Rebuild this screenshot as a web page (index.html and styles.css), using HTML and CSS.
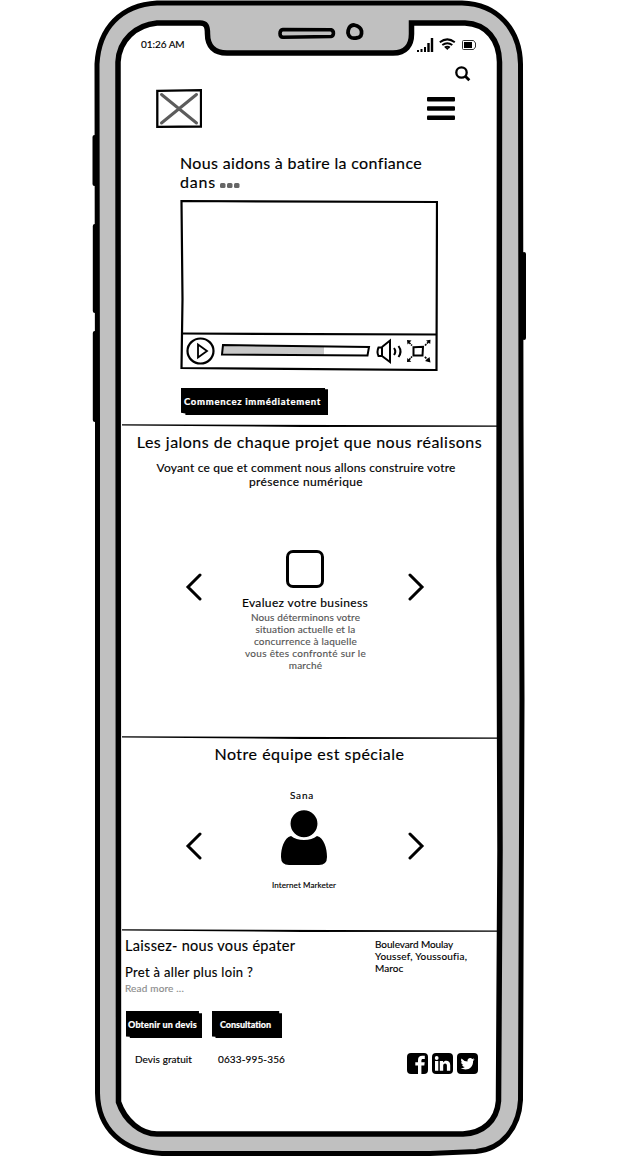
FILE: index.html
```html
<!DOCTYPE html>
<html lang="fr">
<head>
<meta charset="utf-8">
<title>Nous aidons à batire la confiance</title>
<link rel="stylesheet" href="styles.css">
</head>
<body>
<div class="phone">
  <svg class="bezel" width="618" height="1156" viewBox="0 0 618 1156" aria-hidden="true">
    <path d="M94.500 137v47M94.800 226v85M94.800 333v87M524 254v84" stroke="#000" stroke-width="4" stroke-linecap="round"/>
    <path class="case" d="M157 3H462C498 4 520 30 520.500 64L521 420L522 700L520.500 1100C519 1128 502 1149 476 1151.500L430 1153.500H162C122 1152 98 1128 97.500 1093L97.500 420L97 64C99 28 121 5 157 3Z"/>
    <path class="glass" d="M157 23H200C206 23 207.500 26 207.500 34C207.500 46 214 53 227 53H393C406 53 411.500 45 411.500 34V23H465C487 24 499 40 499.500 62L499 560L500 850L498.500 1101C497 1121 483 1133 463 1134H157C141 1134 125 1121 118.500 1102L118 62C119 40 136 25 157 23Z"/>
    <path d="M283 29.500L331 29.800C334.500 31 334 36 331 36.500L283 37.300C279 37 279 30 283 29.500Z" fill="#c0c0c0" stroke="#000" stroke-width="3.600"/>
    <path d="M354 25C349 25 348 30 348 33C349 38 353 38.500 356 38C361 37.500 362 35 361.500 31C361 28 359 26 354 25Z" fill="#c0c0c0" stroke="#000" stroke-width="3.800"/>
  </svg>

  <main class="screen">
    <header class="top">
      <div class="status">
        <span class="time">01:26 AM</span>
        <svg width="60" height="14" viewBox="0 0 60 14">
          <path d="M0 12h2v2h-2zM3.500 11h2v3h-2zM7 9h2v5h-2zM10.300 5h2.400v9h-2.400zM13.800 0h2.400v14h-2.400z"/>
          <path d="M22.800 4.300Q30.300-1.500 37.800 4.300M25.300 7Q30.300 3.400 35.300 7M27.700 9.500Q30.300 7.800 32.900 9.500" fill="none" stroke="#000" stroke-width="2"/>
          <path d="M28.500 10h3.600l-1.800 2z"/>
          <path d="M46.500 2.500H56.500L58.500 5V9L56.500 11.500H46.500Q45.500 11.500 45.500 10.500V3.500Q45.500 2.500 46.500 2.500Z" fill="none" stroke="#333"/>
          <path d="M47 4h8v6h-8z"/>
        </svg>
      </div>
      <svg class="search" width="16" height="16" viewBox="0 0 16 16" fill="none" stroke="#000" stroke-width="2.300"><circle cx="6.500" cy="6.500" r="5.200"/><path d="M10.300 10.300l4 4" stroke-width="2.800"/></svg>
      <div class="brand">
        <svg width="46" height="39" viewBox="0 0 46 39" fill="none"><path d="M1.300 1.800L45 1.200V37.500L1.300 37.800Z" stroke="#000" stroke-width="2.300"/><path d="M5.500 5.500L40.500 34M40.500 5.500L5.500 34" stroke="#5c5c5c" stroke-width="3" stroke-linecap="round"/></svg>
        <svg width="28" height="24" viewBox="0 0 28 24"><rect y="1" width="28" height="4.400" rx="1"/><rect y="10.300" width="28" height="4.400" rx="1"/><rect y="19.500" width="28" height="4.400" rx="1"/></svg>
      </div>
    </header>

    <section class="hero">
      <h1 class="title"><span class="t-hero1">Nous aidons à batire la confiance</span><br><span class="t-hero2">dans</span><svg class="dots" width="20" height="5" viewBox="0 0 20 5" fill="#666"><rect width="5.500" height="5" rx="1.500"/><rect x="7" width="5.500" height="5" rx="1.500"/><rect x="14" width="5.500" height="5" rx="1.500"/></svg></h1>
      <svg class="video" width="258" height="172" viewBox="0 0 258 172" fill="none" stroke="#000" stroke-width="2.200">
        <path d="M1.500 2L257 3L256.500 171L1.500 169L2.500 100Z"/>
        <path d="M1 134.500L257 135.500"/>
        <ellipse cx="20.500" cy="152" rx="13" ry="12.500"/>
        <path d="M18 145.500L27 152L18 158.500Z" stroke-width="1.800"/>
        <path d="M43 146L144 147.300V157L42 155.500Z" fill="#c8c8c8" stroke="none"/>
        <path d="M43 146L189 148L187.500 156.500L42 155.500Z" stroke-width="2"/>
        <path d="M198.500 148.500H202V157H198.500Q196.500 153 198.500 148.500ZM202 148L210 141.500V163L202 157M214 149q2.500 3.500 0 7M218.500 147q4 5.500 0 11" stroke-width="2"/>
        <path d="M233.500 148.300L243 147.800L242.500 156.500H233.500Z" stroke-width="2"/>
        <path d="M229 143.500l3 3M248.500 143l-3.500 3.500M229 161l3-3.500M248.500 161.500l-4-4" stroke-width="1.600" stroke-dasharray="2.200 .8"/>
        <path d="M227 141l4.500.5l-4 4zM246 141.500l4.500-.8l-.3 4.300zM227 163l.3-4l4 3.800zM250.500 163.500l-5.500-1.500l4.500-4z" fill="#000" stroke="none"/>
      </svg>
      <button class="btn btn-main"><span class="t-main">Commencez immédiatement</span></button>
    </section>

    <section class="steps">
      <svg class="rule" width="375" height="4" viewBox="0 0 375 4"><path d="M0 .2L375 1.500V2.800L180 3L0 1.500Z"/></svg>
      <h2 class="title"><span class="t-steps">Les jalons de chaque projet que nous réalisons</span></h2>
      <p class="lead"><span class="t-lead1">Voyant ce que et comment nous allons construire votre</span><br><span class="t-lead2">présence numérique</span></p>
      <div class="carousel">
        <svg class="arrow" width="17" height="28" viewBox="0 0 17 28"><path d="M15 2L3 14L15 26"/></svg>
        <article class="card">
          <div class="box"></div>
          <h3><span class="t-card">Evaluez votre business</span></h3>
          <p><span class="t-d1">Nous déterminons votre</span><br><span class="t-d2">situation actuelle et la</span><br><span class="t-d3">concurrence à laquelle</span><br><span class="t-d4">vous êtes confronté sur le</span><br><span class="t-d5">marché</span></p>
        </article>
        <svg class="arrow" width="17" height="28" viewBox="0 0 17 28"><path d="M2 2L14 14L2 26"/></svg>
      </div>
    </section>

    <section class="team">
      <svg class="rule" width="375" height="4" viewBox="0 0 375 4"><path d="M0 .2L375 1.500V2.800L180 3L0 1.500Z"/></svg>
      <h2 class="title"><span class="t-team">Notre équipe est spéciale</span></h2>
      <div class="carousel">
        <svg class="arrow" width="17" height="28" viewBox="0 0 17 28"><path d="M15 2L3 14L15 26"/></svg>
        <article class="member">
          <p class="name"><span class="t-name">Sana</span></p>
          <svg width="46" height="55" viewBox="0 0 46 55"><path d="M10 26C3 28 0 38 0 47Q0 55 8 55H38Q46 55 46 47C46 38 43 28 36 26Q31 30 23 30T10 26Z"/><circle cx="23" cy="13.700" r="14.200" stroke="#fff" stroke-width="1.500"/></svg>
          <p class="role"><span class="t-role">Internet Marketer</span></p>
        </article>
        <svg class="arrow" width="17" height="28" viewBox="0 0 17 28"><path d="M2 2L14 14L2 26"/></svg>
      </div>
    </section>

    <footer class="foot">
      <svg class="rule" width="375" height="4" viewBox="0 0 375 4"><path d="M0 .2L375 1.500V2.800L180 3L0 1.500Z"/></svg>
      <div class="cols">
        <div class="pitch">
          <h2><span class="t-foot">Laissez- nous vous épater</span></h2>
          <h3><span class="t-pret">Pret à aller plus loin ?</span></h3>
          <p class="more"><span class="t-more">Read more ...</span></p>
        </div>
        <address><span class="t-a1">Boulevard Moulay</span><br><span class="t-a2">Youssef, Youssoufia,</span><br><span class="t-a3">Maroc</span></address>
      </div>
      <div class="actions">
        <button class="btn btn-quote"><span class="t-quote">Obtenir un devis</span></button>
        <button class="btn btn-talk"><span class="t-talk">Consultation</span></button>
      </div>
      <div class="contact">
        <span class="quote"><span class="t-free">Devis gratuit</span></span>
        <span class="phone-no"><span class="t-phone">0633-995-356</span></span>
        <svg class="social" width="71" height="21" viewBox="0 0 71 21">
          <rect width="21" height="21" rx="4"/><rect x="25" width="21" height="21" rx="4"/><rect x="50" width="21" height="21" rx="4"/>
          <g fill="#fff">
            <path d="M11 21V12.500H8.300V9.300H11V7C11 4 12.700 2.700 15.200 2.700H17.800V5.900H16.100C14.700 5.900 14.400 6.500 14.400 7.500V9.300H17.700L17.300 12.500H14.400V21Z"/>
            <path d="M28 8h3.300v9.800h-3.300zM32.800 8h3.200v1.500c1.700-2.600 7.200-2.500 7.200 2.600v5.700h-3.300v-5.200c0-3-3.700-2.800-3.700 0v5.200h-3.400z"/><circle cx="29.700" cy="5" r="1.900"/>
            <path d="M67.500 6.200q-.8.400-1.600.5 1-.6 1.200-1.500-.9.500-1.800.7c-2-2.100-5.400-.4-4.800 2.500q-3.700-.2-6-3c-1 1.700-.3 3.100.9 3.900q-.7 0-1.300-.4c.1 1.700 1.100 2.500 2.300 2.900q-.7.200-1.300.1c.4 1.200 1.400 1.900 2.700 2q-1.800 1.400-4.300 1.200c6 3.600 12.900.3 12.600-7.300q.9-.6 1.400-1.600z"/>
          </g>
        </svg>
      </div>
    </footer>
  </main>
</div>
</body>
</html>
```
FILE: styles.css
```css
* { box-sizing: border-box; }
body { margin: 0; background: #fff; color: #000; font-family: Lato, "Open Sans", sans-serif; }
h1, h2, h3, p { margin: 0; font-weight: 400; }
svg { display: block; flex: none; }
span { white-space: nowrap; }
.phone { position: relative; width: 618px; height: 1156px; overflow: hidden; }
.bezel { position: absolute; top: 0; left: 0; }
.case { fill: #c0c0c0; stroke: #000; stroke-width: 5; }
.glass { fill: #fff; stroke: #000; stroke-width: 5.500; }
.screen { position: relative; width: 375px; margin-left: 122px; -webkit-text-stroke: .15px; }
.title { font-size: 16px; line-height: 19px; }

.status { display: flex; justify-content: space-between; padding: 38px 20px 0 19px; height: 52px; }
.time { font-size: 10px; line-height: 13px; letter-spacing: -.05px; }
.search { margin: 14px 0 0 333px; }
.brand { display: flex; justify-content: space-between; padding: 7px 42px 0 34px; }
.brand svg + svg { margin-top: 7px; }

.hero { height: 296px; padding: 25px 0 0 58px; }
.dots { display: inline-block; margin-left: 4px; }
.video { margin-top: 8px; }
.btn { display: block; border: 0; padding: 0; color: #fff; background: #000; font: 900 9.500px/25px Lato, sans-serif; }
.btn-main { width: 147px; height: 27px; margin: 17px 0 0 1px; padding-left: 3px; text-align: left; clip-path: polygon(0 0, 98% 0, 98% 5%, 100% 5%, 100% 100%, 3% 100%, 3% 94%, 0 92%); }

.steps { height: 312px; text-align: center; }
.steps .title, .team .title { padding-top: 4px; }
.lead { font-size: 12px; line-height: 14px; margin-top: 10px; padding-right: 7px; }
.carousel { display: flex; justify-content: space-between; padding: 0 72px 0 63px; }
.arrow { fill: none; stroke: #000; stroke-width: 3; stroke-linecap: round; }
.steps .arrow { margin-top: 23px; }
.steps .carousel { margin-top: 61px; }
.card { display: flex; flex-direction: column; align-items: center; }
.box { width: 38px; height: 38px; border: 3px solid #000; border-radius: 7px; }
.card h3 { font-size: 12px; line-height: 14px; margin-top: 8px; }
.card p { font-size: 10px; line-height: 12px; margin-top: 1px; padding-left: 1px; color: #555; }

.team { height: 193px; text-align: center; }
.team .carousel { margin-top: 26px; }
.team .arrow { margin-top: 43px; }
.member { display: flex; flex-direction: column; align-items: center; margin-left: -2px; }
.name { font-size: 10px; line-height: 12px; margin-bottom: 9px; padding-right: 4px; }
.name + svg { margin-bottom: 14px; }
.role { font-size: 8px; line-height: 12px; }

.cols { display: flex; justify-content: space-between; padding: 4px 29px 0 3px; height: 78px; }
.foot h2 { font-size: 14.500px; line-height: 18px; }
.foot h3 { font-size: 13px; line-height: 16px; margin-top: 9px; }
.more { font-size: 10px; line-height: 12px; margin-top: 2px; color: #8c8c8c; }
address { font-style: normal; font-size: 10px; line-height: 12px; margin-top: 1px; width: 93px; }
.actions { display: flex; gap: 10px; padding-left: 4px; }
.actions .btn { height: 27px; font-size: 9px; clip-path: polygon(0 0, 96% 0, 96% 8%, 100% 8%, 100% 100%, 5% 100%, 5% 95%, 0 94%); }
.btn-quote { width: 76px; text-align: left; padding-left: 2px; }
.btn-talk { width: 70px; text-align: left; padding-left: 8px; }
.contact { display: flex; padding: 15px 0 0 13px; font-size: 10px; line-height: 12px; }
.quote { width: 83px; }
.phone-no { width: 189px; }

/* per-line tracking */
.t-hero1 { letter-spacing: .343px; }
.t-hero2 { letter-spacing: .8px; }
.t-main { letter-spacing: .68px; }
.t-steps { letter-spacing: .475px; }
.t-lead1 { letter-spacing: .19px; }
.t-lead2 { letter-spacing: .4px; }
.t-card { letter-spacing: .36px; }
.t-d1 { letter-spacing: .145px; }
.t-d2 { letter-spacing: .16px; }
.t-d3 { letter-spacing: .23px; }
.t-d4 { letter-spacing: .31px; }
.t-d5 { letter-spacing: .2px; }
.t-team { letter-spacing: .5px; }
.t-name { letter-spacing: .8px; }
.t-role { letter-spacing: .1px; }
.t-foot { letter-spacing: .31px; }
.t-pret { letter-spacing: .32px; }
.t-more { letter-spacing: .18px; }
.t-a1 { letter-spacing: -.09px; }
.t-a2 { letter-spacing: .24px; }
.t-a3 { letter-spacing: .1px; }
.t-quote { letter-spacing: .15px; }
.t-talk { letter-spacing: -.03px; }
.t-free { letter-spacing: .08px; }
.t-phone { letter-spacing: .13px; }
```
